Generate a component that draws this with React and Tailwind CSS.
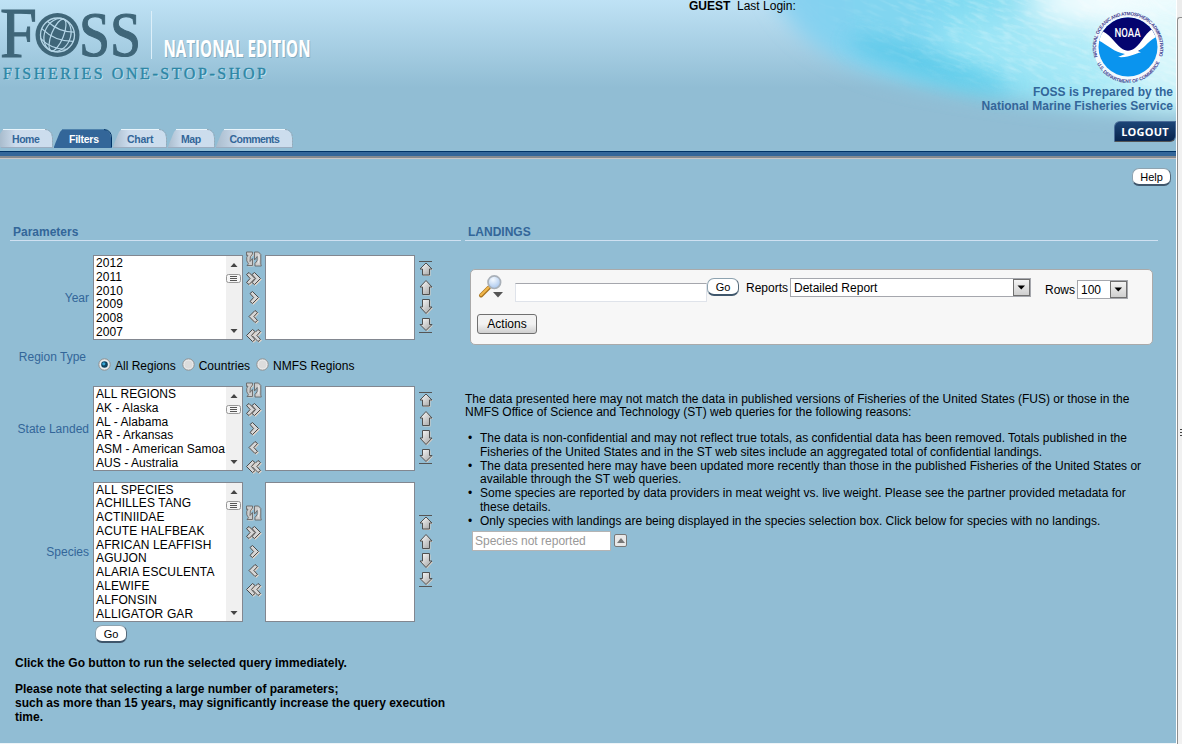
import React from "react";

const years = ["2012", "2011", "2010", "2009", "2008", "2007"];
const states = ["ALL REGIONS", "AK - Alaska", "AL - Alabama", "AR - Arkansas", "ASM - American Samoa", "AUS - Australia"];
const species = ["ALL SPECIES", "ACHILLES TANG", "ACTINIIDAE", "ACUTE HALFBEAK", "AFRICAN LEAFFISH", "AGUJON", "ALARIA ESCULENTA", "ALEWIFE", "ALFONSIN", "ALLIGATOR GAR"];

function WaterArt() {
  return (
    <svg className="absolute top-0 right-0" width="476" height="150" viewBox="700 0 476 150">
      <defs>
        <linearGradient id="sea" gradientUnits="userSpaceOnUse" x1="750" y1="40" x2="1176" y2="10">
          <stop offset="0" stopColor="#90cff0" />
          <stop offset="0.2" stopColor="#82d2f0" />
          <stop offset="0.5" stopColor="#7fdaf1" />
          <stop offset="1" stopColor="#bdeff8" />
        </linearGradient>
        <filter id="b10" x="-30%" y="-60%" width="160%" height="220%"><feGaussianBlur stdDeviation="10" /></filter>
        <filter id="b12" x="-50%" y="-100%" width="200%" height="300%"><feGaussianBlur stdDeviation="16" /></filter>
        <filter id="ripple" x="0" y="0" width="100%" height="100%">
          <feTurbulence type="fractalNoise" baseFrequency="0.06 0.24" numOctaves="3" seed="8" />
          <feColorMatrix values="0 0 0 0 1  0 0 0 0 1  0 0 0 0 1  2.6 0 0 0 -1.15" />
        </filter>
        <linearGradient id="fade" gradientUnits="userSpaceOnUse" x1="820" y1="0" x2="1000" y2="0">
          <stop offset="0" stopColor="#222" />
          <stop offset="1" stopColor="#fff" />
        </linearGradient>
        <mask id="seaMask">
          <path d="M800 -20 C810 30 870 60 1000 80 C1080 90 1130 97 1220 102 L1220 -30 Z" fill="url(#fade)" filter="url(#b10)" />
        </mask>
      </defs>
      <path d="M756 -60 C768 30 825 66 925 86 C1010 102 1090 112 1260 116 L1260 -80 Z" fill="url(#sea)" filter="url(#b10)" />
      <ellipse cx="930" cy="64" rx="85" ry="13" fill="#45c1e5" opacity="0.6" filter="url(#b10)" transform="rotate(17 930 64)" />
      <ellipse cx="1040" cy="50" rx="110" ry="24" fill="#b5effa" opacity="0.6" filter="url(#b12)" transform="rotate(8 1040 50)" />
      <ellipse cx="1125" cy="2" rx="100" ry="26" fill="#f8feff" filter="url(#b12)" />
      <ellipse cx="1165" cy="48" rx="50" ry="45" fill="#e4fafd" opacity="0.7" filter="url(#b12)" />
      <g mask="url(#seaMask)">
        <rect x="700" y="-120" width="600" height="330" filter="url(#ripple)" opacity="0.26" transform="rotate(20 900 60)" />
      </g>
    </svg>
  );
}

function FossLogo() {
  return (
    <svg className="block shrink-0 overflow-visible" width="330" height="90" viewBox="0 0 330 90">
      <g fill="#3f6679" stroke="#3f6679" strokeWidth="1.100" fontFamily="'Liberation Serif', serif">
        <text x="0" y="56.500" fontSize="72" textLength="37" lengthAdjust="spacingAndGlyphs">F</text>
        <text x="79" y="56" fontSize="64" textLength="62" lengthAdjust="spacingAndGlyphs">SS</text>
      </g>
      <circle cx="57.500" cy="35" r="22" fill="#3f6679" />
      <circle cx="57.500" cy="35" r="17" fill="#3f6679" stroke="#b5d6e7" strokeWidth="1.300" />
      <g fill="none" stroke="#b5d6e7" strokeWidth="1.200" transform="rotate(22 57.5 35)">
        <ellipse cx="57.500" cy="35" rx="6" ry="17" />
        <ellipse cx="57.500" cy="35" rx="13" ry="17" />
        <path d="M40.500 35 Q57.500 42 74.500 35 M43 26 Q57.500 32 72 26 M43 44.500 Q57.500 51 72 44.500" />
      </g>
      <path d="M151.500 11V59" stroke="#dceff9" />
      <g fontFamily="'Open Sans', sans-serif" fontWeight="700" fontSize="22.500">
        <text x="164.500" y="58" fill="#6d9cb5" opacity="0.6" textLength="147" lengthAdjust="spacingAndGlyphs">NATIONAL EDITION</text>
        <text x="163.500" y="57" fill="#fff" textLength="147" lengthAdjust="spacingAndGlyphs">NATIONAL EDITION</text>
      </g>
      <g fontFamily="'Liberation Serif', serif" fontSize="16">
        <text x="4" y="80" fill="#c3e6f3" textLength="263">FISHERIES ONE-STOP-SHOP</text>
        <text x="3" y="79" fill="#2c86a5" stroke="#2c86a5" strokeWidth="0.35" textLength="263">FISHERIES ONE-STOP-SHOP</text>
      </g>
    </svg>
  );
}

function NoaaSeal() {
  return (
    <svg className="block overflow-visible" width="72" height="72" viewBox="0 0 72 72">
      <defs>
        <path id="ringTop" d="M5.500 46 A32 32 0 1 1 66.500 46" />
        <path id="ringBottom" d="M3.300 48 A34.300 34.300 0 0 0 68.700 48" />
        <clipPath id="disc"><circle cx="36" cy="36" r="29.500" /></clipPath>
      </defs>
      <circle cx="36" cy="36" r="34.500" fill="#f4f8fc" />
      <g clipPath="url(#disc)">
        <rect width="72" height="72" fill="#0a94ee" />
        <path d="M0 0H72V19C60 23 53 35 47 40L37 43L29 40C22 35 16 22 0 19Z" fill="#04046f" />
        <path d="M0 17C17 19 22 32 29 37C34 40.500 38 40.500 43 37C50 32 53 20 66 15L72 24C58 25 55 36 46 40L49 41.500C43 42 38 47 26 46L33 43C20 41 14 31 0 27Z" fill="#fff" />
      </g>
      <text x="22.500" y="26" fill="#fff" fontFamily="Roboto, sans-serif" fontWeight="500" fontSize="12" textLength="26" lengthAdjust="spacingAndGlyphs">NOAA</text>
      <g fill="#3d3d8f" fontFamily="'Liberation Sans', sans-serif" fontWeight="700" fontSize="4.800">
        <text><textPath href="#ringTop" textLength="122">NATIONAL OCEANIC AND ATMOSPHERIC ADMINISTRATION</textPath></text>
        <text><textPath href="#ringBottom" startOffset="5" textLength="78">U.S. DEPARTMENT OF COMMERCE</textPath></text>
      </g>
    </svg>
  );
}

function Tab({ label, active, width, first, pad }) {
  const w = width;
  const left = first ? `M0 18V5L3 0.500` : `M1 18C3 12 5 8 7 3Q8 0.500 11 0.500`;
  return (
    <div className="relative h-[19px] shrink-0" style={{ width: w }}>
      <svg className="absolute inset-0" width={w} height="19">
        <defs>
          <linearGradient id="tabFill" x1="0" x2="1">
            <stop offset="0" stopColor="#a9bccd" />
            <stop offset="0.3" stopColor="#ccdced" />
            <stop offset="1" stopColor="#ccdded" />
          </linearGradient>
        </defs>
        <path d={`${left}H${w - 9}Q${w - 1} 1 ${w - 1} 9V18Z`} fill={active ? "#336699" : "url(#tabFill)"} />
        <path d={`M${first ? 3 : 9} 0.500H${w - 8}`} stroke={active ? "#4f83ad" : "#e8f4fb"} />
        <path d={`M${w - 8} 0.500Q${w - 0.5} 1 ${w - 0.5} 9V18`} fill="none" stroke={active ? "#003366" : "#97a9b8"} strokeDasharray={active ? "none" : "2 1"} />
        <path d={`M1 18.500H${w}`} stroke={active ? "#336699" : "#9cadc0"} />
      </svg>
      <span className={`relative block pt-[4px] text-[10.500px] leading-[13px] font-bold ${pad} ${active ? "text-white" : "text-[#336699]"}`}>{label}</span>
    </div>
  );
}

function Chevron({ x, dir }) {
  const d = dir === "right" ? `M${x} 2.500L${x + 2.5} 0.500L${x + 8.5} 6.500L${x + 2.5} 12.500L${x} 10.500L${x + 3.6} 6.500Z` : `M${x + 8.5} 2.500L${x + 6} 0.500L${x} 6.500L${x + 6} 12.500L${x + 8.5} 10.500L${x + 4.9} 6.500Z`;
  return (
    <>
      <path d={d} transform="translate(1 1)" fill="#ddd2c8" stroke="#ddd2c8" strokeWidth="0.8" />
      <path d={d} fill="#d6d6d6" stroke="#4a4a4a" strokeWidth="1" />
    </>
  );
}

function ShuttleIcon({ kind }) {
  return (
    <svg className="block" width="16" height="19" viewBox="0 -3 16 19">
      {kind === "reset" && (
        <g>
          <path d="M1.500 0H7.500V2.500Q4.500 4 4.800 8L7.500 6V13.500H2L3 11.500Q0.500 9 1 5.500Z" fill="#ddd2c8" />
          <path d="M0.500 -1H6.500V1Q3.500 3 4 8.500L6.500 5.500V12.500H1L2.500 10.800Q0 8 0.700 4.500L2 2L0.500 2.500Z" fill="#cdcdcd" stroke="#666" strokeWidth="0.900" />
          <path d="M8.500 -1H12.500L14.800 1.500V11L15.300 13H9V10.500Q12 8.500 11.200 3.500L8.500 7Z" fill="#cdcdcd" stroke="#666" strokeWidth="0.900" />
          <path d="M12.700 1.500Q14 6 12 10.500" fill="none" stroke="#eee" strokeWidth="0.900" />
        </g>
      )}
      {kind === "allRight" && <><Chevron x={0.5} dir="right" /><Chevron x={6} dir="right" /></>}
      {kind === "right" && <Chevron x={4} dir="right" />}
      {kind === "left" && <Chevron x={3} dir="left" />}
      {kind === "allLeft" && <><Chevron x={6} dir="left" /><Chevron x={0.5} dir="left" /></>}
    </svg>
  );
}

const orderShapes = {
  top: "M7 4L13 10H10.500V16H3.500V10H1Z",
  up: "M7 2.500L13 9H10.500V16.500H3.500V9H1Z",
  down: "M3.500 2.500H10.500V10H13L7 16.500L1 10H3.500Z",
  bottom: "M3.500 2.500H10.500V8.500H13L7 14.500L1 8.500H3.500Z",
};

function OrderIcon({ kind }) {
  return (
    <svg className="block" width="15" height="19" viewBox="0 0 15 19">
      <defs>
        <linearGradient id="metal" x1="0" y1="0" x2="1" y2="1">
          <stop offset="0" stopColor="#ffffff" />
          <stop offset="1" stopColor="#a0a0a0" />
        </linearGradient>
      </defs>
      <path d={orderShapes[kind]} transform="translate(1 1)" fill="#d8cfc6" />
      <path d={orderShapes[kind]} fill="url(#metal)" stroke="#505050" />
      {kind === "top" && <path d="M0 2.500H13" stroke="#555" />}
      {kind === "bottom" && <path d="M0 16.500H13" stroke="#555" />}
    </svg>
  );
}

function ListBox({ items, tall }) {
  return (
    <div className={`flex w-[150px] border border-[#828790] bg-white ${tall ? "h-[140px]" : "h-[85px]"}`}>
      <div className={`min-w-0 flex-1 overflow-hidden pl-[2px] text-[12px] leading-[13.800px] whitespace-nowrap text-black ${tall ? "pt-[0.500px] tracking-[0.130px]" : "pt-[1px] tracking-[0.050px]"}`}>
        {items.map((t) => <div key={t}>{t}</div>)}
      </div>
      <div className="flex w-[16px] shrink-0 flex-col items-center justify-between bg-[#f0f0f0]">
        <svg className="block" width="16" height="30" viewBox="0 0 16 30">
          <path d="M4.500 11L8 7L11.500 11Z" fill="#444" />
          <rect x="0.500" y="18.500" width="14" height="8" rx="2" fill="#f6f6f6" stroke="#979797" />
          <path d="M4 20.500H11M4 22.500H11M4 24.500H11" stroke="#555" />
        </svg>
        <svg className="block" width="16" height="14" viewBox="0 0 16 14">
          <path d="M4.500 4L8 8L11.500 4Z" fill="#444" />
        </svg>
      </div>
    </div>
  );
}

function Shuttle({ label, items, tall }) {
  return (
    <div className={`flex items-center ${tall ? "h-[140px]" : "h-[85px]"}`}>
      <div className="w-[93px] pr-[4px] text-right text-[12px] leading-[14px] text-[#336699]">{label}</div>
      <ListBox items={items} tall={tall} />
      <div className={`flex w-[22px] flex-col pl-[3px] ${tall ? "pb-[1px]" : "pb-[0px]"}`}>
        {["reset", "allRight", "right", "left", "allLeft"].map((k) => <ShuttleIcon key={k} kind={k} />)}
      </div>
      <div className={`w-[150px] border border-[#828790] bg-white ${tall ? "h-[140px]" : "h-[85px]"}`} />
      <div className={`flex flex-col pl-[4px] ${tall ? "pb-[2px]" : "pb-[1px]"}`}>
        {["top", "up", "down", "bottom"].map((k) => <OrderIcon key={k} kind={k} />)}
      </div>
    </div>
  );
}

function Radio({ label, checked }) {
  return (
    <label className="flex items-center gap-[4px]">
      <svg className="-mt-[4px] block" width="13" height="13" viewBox="0 0 13 13">
        <circle cx="6.500" cy="6.500" r="5.700" fill="#ececec" stroke="#8e8f8f" />
        <circle cx="6.500" cy="6.500" r="4" fill={checked ? "#e2eef4" : "#dcdcdc"} />
        {checked && <><circle cx="6.500" cy="6.500" r="3.300" fill="#10435f" /><circle cx="5.800" cy="5.800" r="1.600" fill="#38a6d6" /></>}
      </svg>
      <span>{label}</span>
    </label>
  );
}

function PillButton({ children, className }) {
  return (
    <button className={`h-[18px] rounded-[7px] border border-b-2 border-[#8ea3b0] border-r-[#54697a] border-b-[#3f566b] bg-white text-[11px] leading-[14px] text-black ${className}`}>{children}</button>
  );
}

function Select({ value, className }) {
  return (
    <div className={`flex h-[19px] border border-[#a5a7ad] bg-white text-[12px] leading-[18px] ${className}`}>
      <span className="flex-1 pl-[3px]">{value}</span>
      <span className="flex w-[17px] items-center justify-center border border-[#707070] bg-linear-to-b from-[#f4f4f4] to-[#cfcfcf]">
        <svg width="9" height="5" viewBox="0 0 9 5"><path d="M0.500 0.500H8L4.250 4.500Z" fill="#000" /></svg>
      </span>
    </div>
  );
}

function SearchIcon() {
  return (
    <svg className="block" width="26" height="26" viewBox="0 0 26 26">
      <defs>
        <radialGradient id="lens" cx="0.4" cy="0.3" r="0.8">
          <stop offset="0" stopColor="#f5faff" />
          <stop offset="1" stopColor="#9fc0ec" />
        </radialGradient>
      </defs>
      <path d="M3 20.500L11 12.500" stroke="#a87420" strokeWidth="4" strokeLinecap="round" />
      <path d="M3 20L10.500 12.500" stroke="#f0b64a" strokeWidth="2.400" strokeLinecap="round" />
      <circle cx="16.300" cy="7.200" r="6.300" fill="url(#lens)" stroke="#a9b0b8" strokeWidth="1.700" />
      <path d="M15 17H25L20 22.500Z" fill="#555" />
    </svg>
  );
}

const bullets = [
  ["The data is non-confidential and may not reflect true totals, as confidential data has been removed. Totals published in the", "Fisheries of the United States and in the ST web sites include an aggregated total of confidential landings."],
  ["The data presented here may have been updated more recently than those in the published Fisheries of the United States or", "available through the ST web queries."],
  ["Some species are reported by data providers in meat weight vs. live weight. Please see the partner provided metadata for", "these details."],
  ["Only species with landings are being displayed in the species selection box. Click below for species with no landings."],
];

export default function App() {
  return (
    <div className="flex h-[744px] w-[1182px] overflow-hidden bg-[#f0f0f0] font-['Liberation_Sans',Arial,sans-serif] text-[12px] text-black">
      <div className="flex w-[1176px] shrink-0 flex-col border-b border-[#eef4f8] bg-[#91bdd4]">
        <header className="relative flex h-[151px] flex-col overflow-hidden bg-linear-to-b from-[#bfe2f5] from-0% to-[#91bdd4] to-[58%]">
          <WaterArt />
          <div className="relative flex h-[129px] justify-between">
            <FossLogo />
            <div className="flex-1 pl-[359px] text-[12px] leading-[13px] whitespace-pre"><b>GUEST</b>{"  Last Login:"}</div>
            <div className="flex shrink-0 flex-col items-end pt-[11px]">
              <div className="mr-[12px]"><NoaaSeal /></div>
              <div className="mt-[2px] mr-[3px] text-right text-[12px] leading-[14px] font-bold text-[#336699]">FOSS is Prepared by the<br />National Marine Fisheries Service</div>
              <button className="mt-[8px] h-[21px] w-[62px] shrink-0 rounded-tl-[6px] rounded-br-[6px] border border-[#4a6d98] border-b-[#555] bg-linear-to-b from-[#1c4577] to-[#08244e] font-['Open_Sans',sans-serif] text-[11px] leading-[18px] font-bold tracking-[0.200px] text-white">LOGOUT</button>
            </div>
          </div>
          <nav className="relative flex h-[19px]">
            <Tab label="Home" width={53} first pad="pl-[12px] tracking-[-0.450px]" />
            <Tab label="Filters" width={59} active pad="pl-[16px] tracking-[-0.250px]" />
            <Tab label="Chart" width={55} pad="pl-[15px] tracking-[-0.250px]" />
            <Tab label="Map" width={48} pad="pl-[14px] tracking-[-0.450px]" />
            <Tab label="Comments" width={78} pad="pl-[14.500px] tracking-[-0.550px]" />
          </nav>
        </header>
        <div className="h-[8px] shrink-0 border-t border-b border-t-[#003366] border-b-[#c9c5c5] bg-[#336699]">
          <div className="mt-[4px] h-[2px] bg-[#848a90]" />
        </div>
        <div className="flex h-[64px] shrink-0 items-start justify-end pt-[9px] pr-[5px]">
          <PillButton className="w-[39px]">Help</PillButton>
        </div>
        <main className="flex min-h-0 flex-1 gap-[4px] pl-[10px]">
          <section className="w-[451px] shrink-0">
            <h2 className="h-[18px] border-b border-[#cfe0f1] pl-[3px] text-[12px] leading-[19px] font-bold text-[#336699]">Parameters</h2>
            <div className="-ml-[10px] flex flex-col pt-[14px]">
              <Shuttle label="Year" items={years} />
              <div className="flex h-[46px]">
                <div className="w-[86px] pt-[10px] text-right leading-[14px] text-[#336699]">Region Type</div>
                <div className="mt-[19px] flex h-[14px] items-center gap-[6px] pl-[12px] leading-[14px]">
                  <Radio label="All Regions" checked />
                  <Radio label="Countries" />
                  <Radio label="NMFS Regions" />
                </div>
              </div>
              <Shuttle label="State Landed" items={states} />
              <div className="h-[11px]" />
              <Shuttle label="Species" items={species} tall />
              <div className="flex pt-[3px] pl-[95px]"><PillButton className="w-[32px]">Go</PillButton></div>
              <div className="pt-[13px] pl-[15px] leading-[14px] font-bold whitespace-nowrap">
                <p>Click the Go button to run the selected query immediately.</p>
                <p className="pt-[12px]">Please note that selecting a large number of parameters;<br />such as more than 15 years, may significantly increase the query execution<br />time.</p>
              </div>
            </div>
          </section>
          <section className="w-[693px] shrink-0">
            <h2 className="h-[18px] border-b border-[#cfe0f1] pl-[3px] text-[12px] leading-[19px] font-bold text-[#336699]">LANDINGS</h2>
            <div className="mt-[28px] ml-[5px] h-[76px] w-[683px] rounded-[5px] border border-[#aaa] bg-[#f7f7f7] pl-[6px]">
              <div className="flex h-[44px] items-start">
                <div className="w-[38px] pt-[5px] pl-[1px]"><SearchIcon /></div>
                <div className="mt-[13px] h-[19px] w-[192px] border border-[#dfe3ea] border-t-[#a5a7ad] bg-white" />
                <PillButton className="mt-[8px] w-[32px]">Go</PillButton>
                <span className="w-[51px] pt-[11px] pl-[7px] leading-[14px]">Reports</span>
                <Select className="mt-[8px] w-[241px]" value="Detailed Report" />
                <span className="w-[46px] pt-[13px] pl-[14px] leading-[14px]">Rows</span>
                <Select className="mt-[10px] w-[51px]" value="100" />
              </div>
              <button className="h-[20px] w-[60px] rounded-[3px] border border-[#707070] bg-linear-to-b from-[#f2f2f2] from-50% to-[#cfcfcf] text-[12px] leading-[17px]">Actions</button>
            </div>
            <div className="pt-[47.500px] leading-[13.800px] whitespace-nowrap">
              <p>The data presented here may not match the data in published versions of Fisheries of the United States (FUS) or those in the<br />NMFS Office of Science and Technology (ST) web queries for the following reasons:</p>
              <ul className="pt-[12px]">
                {bullets.map((b) => (
                  <li key={b[0]} className="flex">
                    <span className="w-[15px] pl-[3px]">•</span>
                    <span>{b.map((l) => <span key={l} className="block">{l}</span>)}</span>
                  </li>
                ))}
              </ul>
            </div>
            <div className="flex items-center gap-[3px] pt-[2px] pl-[7px]">
              <div className="h-[20px] w-[139px] border border-[#b4b4b4] bg-white pl-[2px] text-[12px] leading-[18px] text-[#999]">Species not reported</div>
              <div className="flex h-[13px] w-[13px] items-center justify-center rounded-[2px] border border-[#777] bg-[#e8e8e8]">
                <svg width="8" height="5" viewBox="0 0 8 5"><path d="M0 5L4 0L8 5Z" fill="#777" /></svg>
              </div>
            </div>
          </section>
        </main>
      </div>
      <div className="flex w-[6px] flex-col border-l border-white bg-[#ececec]">
        <div className="h-[17px]" />
        <div className="flex flex-1 flex-col items-end rounded-tl-[3px] border-t border-l border-[#8e8e8e] bg-[#f1f1f1] pt-[411px]">
          <svg width="2" height="8" viewBox="0 0 2 8"><path d="M0 0.500H2M0 3.500H2M0 6.500H2" stroke="#444" /></svg>
        </div>
      </div>
    </div>
  );
}
